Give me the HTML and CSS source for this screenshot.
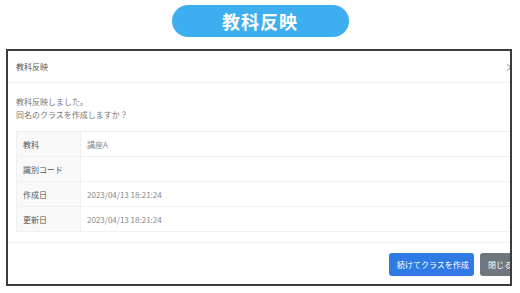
FILE: index.html
```html
<!DOCTYPE html>
<html lang="ja">

<head>
    <meta charset="UTF-8">
    <meta name="viewport" content="width=device-width, initial-scale=1.0">
    <title>教科反映</title>
    <link rel="stylesheet" href="styles.css">
</head>

<body>

    <header class="banner">
        <div class="pill">教科反映</div>
    </header>

    <main class="frame">
        <div class="modal">
            <div class="modal-header">
                <span class="modal-title">教科反映</span>
                <span class="close">×</span>
            </div>
            <div class="modal-body">
                <p class="message">教科反映しました。<br>同名のクラスを作成しますか？</p>
                <table class="info">
                    <tr>
                        <th>教科</th>
                        <td>講座A</td>
                    </tr>
                    <tr>
                        <th>識別コード</th>
                        <td></td>
                    </tr>
                    <tr>
                        <th>作成日</th>
                        <td>2023/04/13 18:21:24</td>
                    </tr>
                    <tr>
                        <th>更新日</th>
                        <td>2023/04/13 18:21:24</td>
                    </tr>
                </table>
            </div>
            <div class="modal-footer">
                <button class="btn btn-primary">続けてクラスを作成</button>
                <button class="btn btn-secondary">閉じる</button>
            </div>
        </div>
    </main>

</body>

</html>
```

FILE: styles.css
```css
body {
    font-family: "Noto Sans CJK JP", "Liberation Sans", sans-serif;
    margin: 0;
    background-color: #fff;
    color: #555;
}

.banner {
    display: flex;
    justify-content: center;
    padding-top: 5px;
}

.pill {
    width: 177px;
    height: 32px;
    border-radius: 16px;
    background-color: #3daff0;
    color: #fff;
    font-size: 18px;
    font-weight: bold;
    display: flex;
    justify-content: center;
    align-items: center;
    letter-spacing: 1px;
}

.frame {
    display: block;
    margin: 12px 0 0 6px;
    width: 506px;
    height: 237px;
    border: 2px solid #3c3c3c;
    box-sizing: border-box;
    overflow: hidden;
}

.modal {
    width: 520px;
}

.modal-header {
    height: 31px;
    padding: 0 8px;
    display: flex;
    justify-content: space-between;
    align-items: center;
    border-bottom: 1px solid #f0f0f0;
    font-size: 8px;
    color: #555;
}

.close {
    font-size: 11px;
    color: #888;
    margin-right: 4px;
}

.modal-body {
    padding: 12px 8px 10px;
}

.message {
    margin: 0 0 10px;
    font-size: 8px;
    line-height: 13px;
    color: #777;
}

.info {
    width: 100%;
    border-collapse: collapse;
    font-size: 8px;
}

.info th,
.info td {
    height: 24px;
    border: 1px solid #f0f0f0;
    padding: 0 6px;
    text-align: left;
    font-weight: normal;
}

.info th {
    width: 51px;
    background-color: #f9f9f9;
    color: #555;
}

.info td {
    color: #888;
}

.modal-footer {
    display: flex;
    justify-content: flex-end;
    gap: 6px;
    padding: 10px 8px;
    border-top: 1px solid #f0f0f0;
}

.btn {
    height: 23px;
    border: none;
    border-radius: 3px;
    color: #fff;
    font-family: inherit;
    font-size: 8px;
    padding: 0 8px;
    white-space: nowrap;
}

.btn-primary {
    width: 85px;
    background-color: #2f7ae5;
}

.btn-secondary {
    background-color: #6f767d;
}
```
